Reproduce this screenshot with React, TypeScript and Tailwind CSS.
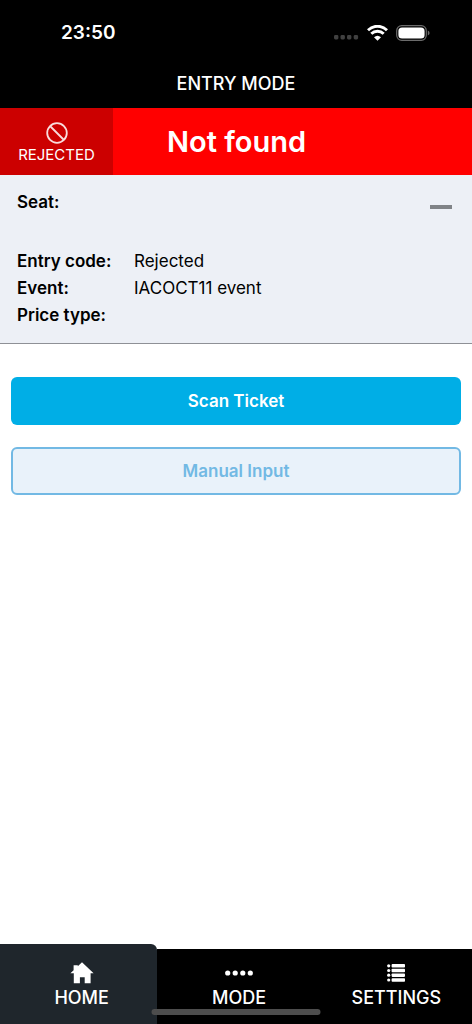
import type { ReactNode } from "react";

interface DetailRow {
  label: string;
  value: string;
}

interface TabItem {
  id: string;
  label: string;
  icon: ReactNode;
}

const DETAILS: DetailRow[] = [
  { label: "Entry code:", value: "Rejected" },
  { label: "Event:", value: "IACOCT11 event" },
  { label: "Price type:", value: "" },
];

const ACTIVE_TAB = "home";

const TABS: TabItem[] = [
  { id: "home", label: "HOME", icon: <HomeIcon /> },
  { id: "mode", label: "MODE", icon: <DotsIcon /> },
  { id: "settings", label: "SETTINGS", icon: <ListIcon /> },
];

function HomeIcon() {
  return (
    <svg width="24" height="22" viewBox="0 0 24 22" fill="currentColor">
      <path d="M12 0.3 23.6 11.3H20.6V21.3H14.7V15.2H9.9V21.3H3.8V11.3H0.4L3.6 8.3V3.2H7.8V4.3Z" />
    </svg>
  );
}

function DotsIcon() {
  return (
    <svg width="30" height="22" viewBox="0 0 30 22" fill="currentColor">
      {[3.7, 11.2, 18.8, 26.3].map((cx) => (
        <circle key={cx} cx={cx} cy="11" r="2.6" />
      ))}
    </svg>
  );
}

function ListIcon() {
  return (
    <svg width="18" height="22" viewBox="0 0 18 22" fill="currentColor">
      {[3.8, 8.5, 13.2, 18].map((cy) => (
        <g key={cy}>
          <circle cx="1.7" cy={cy} r="1.6" />
          <rect x="4.6" y={cy - 1.7} width="13.4" height="3.4" rx="0.8" />
        </g>
      ))}
    </svg>
  );
}

function StatusBar() {
  return (
    <div className="flex h-16 items-center justify-between pl-[61px] pr-[42px] pt-px">
      <span className="text-[19px] font-semibold leading-6">23:50</span>
      <div className="flex items-center gap-2">
        {/* No cellular signal */}
        <svg className="mt-2" width="25" height="6" viewBox="0 0 25 6" fill="#404040">
          {[0, 6.5, 13, 19.7].map((x) => (
            <rect key={x} x={x} y="1" width="4.4" height="4.4" rx="1.4" />
          ))}
        </svg>
        <svg width="21" height="16" viewBox="0 0 21 16" fill="none" stroke="#fff">
          <path d="M1 5.3C6.3-.1 14.7-.1 20 5.3" strokeWidth="2.9" />
          <path d="M4.3 8.8C7.8 5.3 13.2 5.3 16.7 8.8" strokeWidth="2.9" />
          <path d="M7 12.2Q10.5 9.2 14 12.2L10.5 15.8Z" fill="#fff" stroke="none" />
        </svg>
        <svg width="34" height="16" viewBox="0 0 34 16">
          <rect x="0.7" y="0.7" width="29.6" height="14.6" rx="5" fill="none" stroke="#6b6b6b" strokeWidth="1.2" />
          <rect x="2.4" y="2.4" width="26.2" height="11.2" rx="3.6" fill="#fff" />
          <path d="M31.8 5.6Q33.6 6.4 33.6 8T31.8 10.4Z" fill="#6b6b6b" />
        </svg>
      </div>
    </div>
  );
}

function ResultBanner() {
  return (
    <div className="flex bg-[#ff0000] text-white">
      <div className="flex h-[67px] w-[113px] flex-col items-center justify-center bg-[#cc0000] pt-1">
        <svg width="22" height="22" viewBox="0 0 22 22" fill="none" stroke="#f9dcdc" strokeWidth="1.8">
          <circle cx="11" cy="11" r="9.8" />
          <path d="M4 4 18 18" />
        </svg>
        <span className="text-[15px] leading-[22px]">REJECTED</span>
      </div>
      <h2 className="flex flex-1 items-center pl-[54px] text-[29px] font-semibold leading-9">
        Not found
      </h2>
    </div>
  );
}

function TicketDetails() {
  return (
    <section className="border-b border-[#8e9096] bg-[#edf0f6] px-[17px] pb-[14px] pt-[14px] text-[17px] leading-[27px] text-black">
      <div className="flex h-[59px] justify-between">
        <span className="font-semibold">Seat:</span>
        <button type="button" aria-label="Collapse details" className="mr-[3px] mt-4 h-1 w-[22px] bg-[#808387]" />
      </div>
      <dl className="grid grid-cols-[117px_1fr]">
        {DETAILS.map((row) => (
          <div key={row.label} className="contents">
            <dt className="font-semibold">{row.label}</dt>
            <dd>{row.value}</dd>
          </div>
        ))}
      </dl>
    </section>
  );
}

function TabBar() {
  return (
    <nav className="relative grid grid-cols-3 items-end">
      {TABS.map((tab) => {
        const active = tab.id === ACTIVE_TAB;
        return (
          <a
            key={tab.id}
            href={`#${tab.id}`}
            aria-current={active ? "page" : undefined}
            className={
              active
                ? "flex h-20 flex-col items-center justify-end rounded-tr-md bg-[#1f262c] pb-3.5 pl-1.5"
                : "flex h-[75px] flex-col items-center justify-end bg-black pb-3.5 pl-1.5"
            }
          >
            {tab.icon}
            <span className="mt-0.5 text-lg font-medium leading-6">{tab.label}</span>
          </a>
        );
      })}
      {/* Home indicator */}
      <div className="absolute bottom-[9px] left-1/2 h-1.5 w-[169px] -translate-x-1/2 rounded-full bg-[#4d4d4d]" />
    </nav>
  );
}

export default function App() {
  return (
    <div className="flex min-h-screen flex-col bg-white font-['Inter',sans-serif] text-white">
      <header className="bg-black">
        <StatusBar />
        <h1 className="h-11 pt-2 text-center text-lg font-medium leading-6">ENTRY MODE</h1>
      </header>
      <ResultBanner />
      <TicketDetails />
      <main className="flex flex-1 flex-col gap-[22px] px-[11px] pt-[33px]">
        <button type="button" className="h-12 rounded-md bg-[#00aee6] pt-0.5 text-[17px] font-semibold">
          Scan Ticket
        </button>
        <button
          type="button"
          className="h-12 rounded-md border-2 border-[#72b9e4] bg-[#e9f2fa] pt-0.5 text-[17px] font-semibold text-[#72b9e4]"
        >
          Manual Input
        </button>
      </main>
      <TabBar />
    </div>
  );
}
